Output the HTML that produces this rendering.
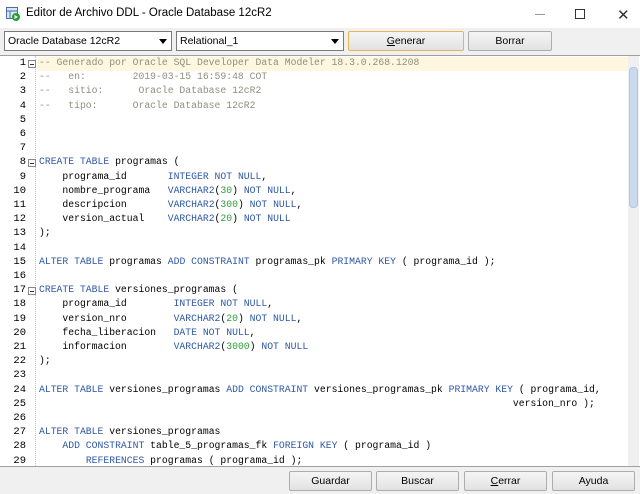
<!DOCTYPE html>
<html><head><meta charset="utf-8"><style>
*{margin:0;padding:0;box-sizing:border-box}
body{width:640px;height:494px;background:#f0f0f0;font-family:"Liberation Sans",sans-serif;font-size:11px;position:relative;overflow:hidden}
.title{position:absolute;left:0;top:0;width:640px;height:28px;background:#fff;}
.title .t{position:absolute;left:26px;top:7px;font-size:11.5px;color:#000}
.ctl{position:absolute;font-size:10.5px;color:#000}
.combo{background:#fff;border:1px solid #7a7a7a;height:20px;top:31px;padding:3px 3px;}
.combo .ar{position:absolute;right:4px;top:7px;width:0;height:0;border-left:4px solid transparent;border-right:4px solid transparent;border-top:5px solid #000}
.btn{background:linear-gradient(#f5f5f5,#e2e2e2);border:1px solid #adadad;height:20px;text-align:center;padding-top:3px;border-radius:2px}
.editor{position:absolute;left:0;top:55px;width:640px;height:412px;background:#fff;border-top:1px solid #a0a0a0;border-bottom:1px solid #a0a0a0}
.gut{position:absolute;left:0;top:0;width:26px;text-align:right;font-family:"Liberation Mono",monospace;font-size:10.5px;line-height:14.2px;color:#000;white-space:pre}
.code{position:absolute;left:39px;top:0;font-family:"Liberation Mono",monospace;font-size:9.75px;line-height:14.2px;white-space:pre;color:#000}
.k{color:#2e57a6}.c{color:#8f8f7f}.n{color:#2e9d3a}
.hl{position:absolute;left:38px;top:1px;width:590px;height:14px;background:#fff6e0}
.dots{position:absolute;left:35px;top:0;height:410px;border-left:1px dotted #c8c8c8}
.fold{position:absolute;left:28px;width:8px;height:8px;border:1px solid #888;background:#fff}
.fold:after{content:"";position:absolute;left:1px;top:3px;width:4px;height:1px;background:#333}
.sb{position:absolute;left:628px;top:0;width:11px;height:410px;background:#f0f0f0}
.thumb{position:absolute;left:629px;top:11px;width:9px;height:141px;background:#c9d9ee;border:1px solid #b3c6e0;border-radius:4px}
</style></head><body>
<div class="title">
<svg style="position:absolute;left:6px;top:7px" width="14" height="14"><rect x="0.5" y="0.5" width="11" height="11" fill="#dce6f4" stroke="#4a6fa5"/><line x1="0.5" y1="4" x2="11.5" y2="4" stroke="#4a6fa5"/><line x1="4" y1="4" x2="4" y2="11.5" stroke="#4a6fa5"/><circle cx="10" cy="10" r="4" fill="#2a9d3a"/><path d="M8.5 8 L12 10 L8.5 12Z" fill="#fff"/></svg>
<div class="t">Editor de Archivo DDL - Oracle Database 12cR2</div>
<div style="position:absolute;left:535px;top:14px;width:10px;height:1px;background:#999"></div>
<div style="position:absolute;left:575px;top:9px;width:10px;height:10px;border:1px solid #333"></div>
<div style="position:absolute;left:617px;top:6px;font-size:15px;color:#333">✕</div>
</div>
<div class="ctl combo" style="left:4px;width:168px">Oracle Database 12cR2<span class="ar"></span></div>
<div class="ctl combo" style="left:176px;width:168px">Relational_1<span class="ar"></span></div>
<div class="ctl btn" style="left:348px;top:31px;width:116px;border-color:#e8b45a"><u>G</u>enerar</div>
<div class="ctl btn" style="left:468px;top:31px;width:84px">Borrar</div>
<div class="editor">
<div class="hl"></div>
<div class="dots"></div>
<div class="fold" style="top:4px"></div>
<div class="fold" style="top:103px"></div>
<div class="fold" style="top:231px"></div>
<div class="gut">1
2
3
4
5
6
7
8
9
10
11
12
13
14
15
16
17
18
19
20
21
22
23
24
25
26
27
28
29</div>
<div class="code"><span class="c">-- Generado por Oracle SQL Developer Data Modeler 18.3.0.268.1208
--   en:        2019-03-15 16:59:48 COT
--   sitio:      Oracle Database 12cR2
--   tipo:      Oracle Database 12cR2</span>



<span class="k">CREATE TABLE</span> programas (
    programa_id       <span class="k">INTEGER NOT NULL</span>,
    nombre_programa   <span class="k">VARCHAR2</span>(<span class="n">30</span>) <span class="k">NOT NULL</span>,
    descripcion       <span class="k">VARCHAR2</span>(<span class="n">300</span>) <span class="k">NOT NULL</span>,
    version_actual    <span class="k">VARCHAR2</span>(<span class="n">20</span>) <span class="k">NOT NULL</span>
);

<span class="k">ALTER TABLE</span> programas <span class="k">ADD CONSTRAINT</span> programas_pk <span class="k">PRIMARY KEY</span> ( programa_id );

<span class="k">CREATE TABLE</span> versiones_programas (
    programa_id        <span class="k">INTEGER NOT NULL</span>,
    version_nro        <span class="k">VARCHAR2</span>(<span class="n">20</span>) <span class="k">NOT NULL</span>,
    fecha_liberacion   <span class="k">DATE NOT NULL</span>,
    informacion        <span class="k">VARCHAR2</span>(<span class="n">3000</span>) <span class="k">NOT NULL</span>
);

<span class="k">ALTER TABLE</span> versiones_programas <span class="k">ADD CONSTRAINT</span> versiones_programas_pk <span class="k">PRIMARY KEY</span> ( programa_id,
                                                                                 version_nro );

<span class="k">ALTER TABLE</span> versiones_programas
    <span class="k">ADD CONSTRAINT</span> table_5_programas_fk <span class="k">FOREIGN KEY</span> ( programa_id )
        <span class="k">REFERENCES</span> programas ( programa_id );</div>
<div class="sb"></div>
<div class="thumb"></div>
</div>
<div class="ctl btn" style="left:289px;top:471px;width:83px">Guardar</div>
<div class="ctl btn" style="left:376px;top:471px;width:83px">Buscar</div>
<div class="ctl btn" style="left:464px;top:471px;width:83px"><u>C</u>errar</div>
<div class="ctl btn" style="left:552px;top:471px;width:83px">Ayuda</div>
</body></html>
